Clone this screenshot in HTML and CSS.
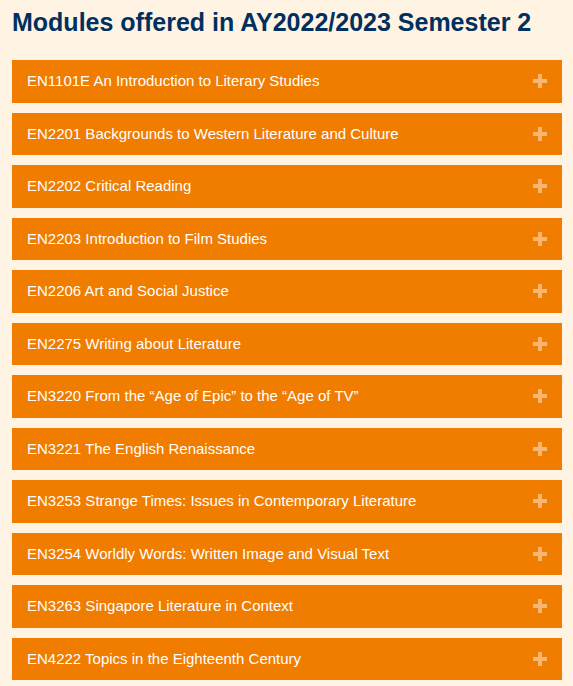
FILE: index.html
```html
<!DOCTYPE html>
<html lang="en">
<head>
	<meta charset="UTF-8">
	<title>Modules offered</title>
<link rel="stylesheet" href="styles.css">
</head>
<body>
	<div id="wrap">
		<h1 class="title">Modules offered in AY2022/2023 Semester 2</h1>
		<ul class="list">
			<li class="item"><span>EN1101E An Introduction to Literary Studies</span><svg class="plus" viewBox="0 0 14 14"><rect x="5" y="0" width="4" height="14"/><rect x="0" y="5" width="14" height="4"/></svg></li>
			<li class="item"><span>EN2201 Backgrounds to Western Literature and Culture</span><svg class="plus" viewBox="0 0 14 14"><rect x="5" y="0" width="4" height="14"/><rect x="0" y="5" width="14" height="4"/></svg></li>
			<li class="item"><span>EN2202 Critical Reading</span><svg class="plus" viewBox="0 0 14 14"><rect x="5" y="0" width="4" height="14"/><rect x="0" y="5" width="14" height="4"/></svg></li>
			<li class="item"><span>EN2203 Introduction to Film Studies</span><svg class="plus" viewBox="0 0 14 14"><rect x="5" y="0" width="4" height="14"/><rect x="0" y="5" width="14" height="4"/></svg></li>
			<li class="item"><span>EN2206 Art and Social Justice</span><svg class="plus" viewBox="0 0 14 14"><rect x="5" y="0" width="4" height="14"/><rect x="0" y="5" width="14" height="4"/></svg></li>
			<li class="item"><span>EN2275 Writing about Literature</span><svg class="plus" viewBox="0 0 14 14"><rect x="5" y="0" width="4" height="14"/><rect x="0" y="5" width="14" height="4"/></svg></li>
			<li class="item"><span>EN3220 From the “Age of Epic” to the “Age of TV”</span><svg class="plus" viewBox="0 0 14 14"><rect x="5" y="0" width="4" height="14"/><rect x="0" y="5" width="14" height="4"/></svg></li>
			<li class="item"><span>EN3221 The English Renaissance</span><svg class="plus" viewBox="0 0 14 14"><rect x="5" y="0" width="4" height="14"/><rect x="0" y="5" width="14" height="4"/></svg></li>
			<li class="item"><span>EN3253 Strange Times: Issues in Contemporary Literature</span><svg class="plus" viewBox="0 0 14 14"><rect x="5" y="0" width="4" height="14"/><rect x="0" y="5" width="14" height="4"/></svg></li>
			<li class="item"><span>EN3254 Worldly Words: Written Image and Visual Text</span><svg class="plus" viewBox="0 0 14 14"><rect x="5" y="0" width="4" height="14"/><rect x="0" y="5" width="14" height="4"/></svg></li>
			<li class="item"><span>EN3263 Singapore Literature in Context</span><svg class="plus" viewBox="0 0 14 14"><rect x="5" y="0" width="4" height="14"/><rect x="0" y="5" width="14" height="4"/></svg></li>
			<li class="item"><span>EN4222 Topics in the Eighteenth Century</span><svg class="plus" viewBox="0 0 14 14"><rect x="5" y="0" width="4" height="14"/><rect x="0" y="5" width="14" height="4"/></svg></li>
		</ul>
	</div>
</body>
</html>
```

FILE: styles.css
```css
body{
	margin: 0;
	background: #fff4e3;
	font-family: "Liberation Sans", Arial, sans-serif;
}
#wrap{
	padding: 9px 11px 0 12px;
}
.title{
	margin: 0 0 24px;
	font-size: 25px;
	line-height: 27px;
	font-weight: bold;
	color: #00305f;
}
.list{
	list-style: none;
	margin: 0;
	padding: 0;
	display: flex;
	flex-direction: column;
	gap: 10px;
}
.item{
	display: flex;
	align-items: center;
	justify-content: space-between;
	padding: 12px 15px;
	line-height: 18.5px;
	font-size: 15px;
	color: #fff;
	background-color: #f07c00;
}
.plus{
	width: 14px;
	height: 14px;
	fill: #f8b672;
	flex-shrink: 0;
}
```
